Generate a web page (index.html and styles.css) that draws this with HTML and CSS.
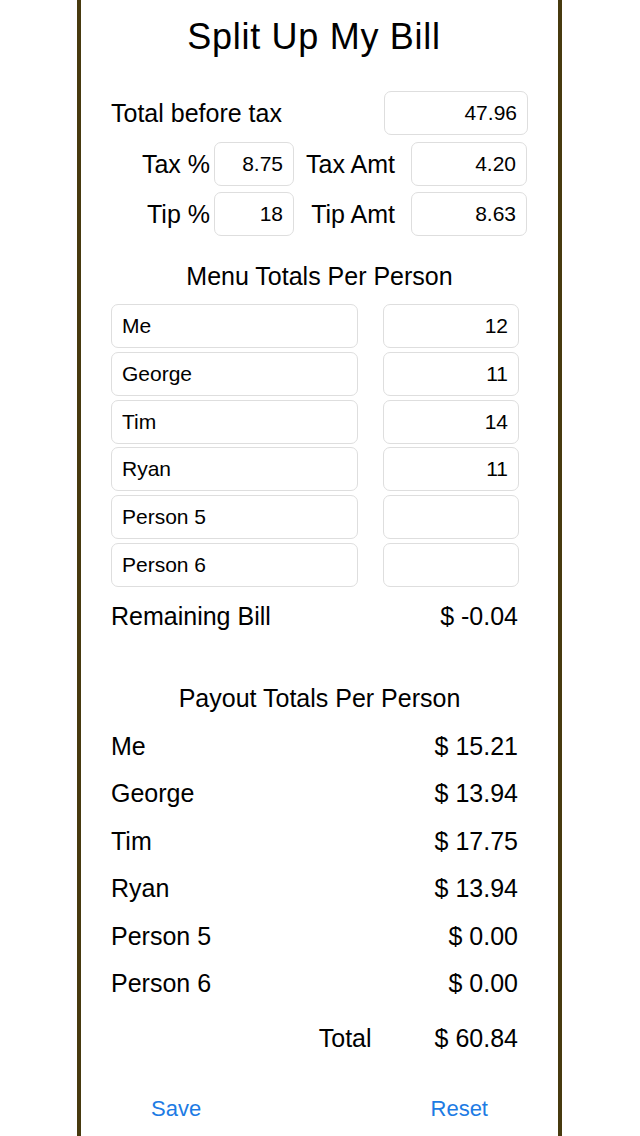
FILE: index.html
```html
<!DOCTYPE html>
<html>
<head>
<meta charset="utf-8">
<link rel="stylesheet" href="styles.css">
</head>
<body>
<div class="page">
  <div class="panel">
    <h1 class="title">Split Up My Bill</h1>

    <div class="bill">
      <div class="row-total">
        <span class="label">Total before tax</span>
        <input class="field num w-total" type="text" value="47.96">
      </div>
      <div class="row-rate">
        <span class="label right">Tax %</span>
        <input class="field num" type="text" value="8.75">
        <span class="label right">Tax Amt</span>
        <input class="field num" type="text" value="4.20">
      </div>
      <div class="row-rate">
        <span class="label right">Tip %</span>
        <input class="field num" type="text" value="18">
        <span class="label right">Tip Amt</span>
        <input class="field num" type="text" value="8.63">
      </div>
    </div>

    <h2 class="heading menu-heading">Menu Totals Per Person</h2>

    <div class="menu">
      <input class="field name" type="text" value="Me"><input class="field num" type="text" value="12">
      <input class="field name" type="text" value="George"><input class="field num" type="text" value="11">
      <input class="field name" type="text" value="Tim"><input class="field num" type="text" value="14">
      <input class="field name" type="text" value="Ryan"><input class="field num" type="text" value="11">
      <input class="field name" type="text" value="Person 5"><input class="field num" type="text" value="">
      <input class="field name" type="text" value="Person 6"><input class="field num" type="text" value="">
    </div>

    <div class="line remaining">
      <span>Remaining Bill</span>
      <span>$ -0.04</span>
    </div>

    <h2 class="heading payout-heading">Payout Totals Per Person</h2>

    <div class="payout">
      <div class="line"><span>Me</span><span>$ 15.21</span></div>
      <div class="line"><span>George</span><span>$ 13.94</span></div>
      <div class="line"><span>Tim</span><span>$ 17.75</span></div>
      <div class="line"><span>Ryan</span><span>$ 13.94</span></div>
      <div class="line"><span>Person 5</span><span>$ 0.00</span></div>
      <div class="line"><span>Person 6</span><span>$ 0.00</span></div>
    </div>

    <div class="line total">
      <span>Total</span>
      <span>$ 60.84</span>
    </div>

    <div class="actions">
      <span class="btn">Save</span>
      <span class="btn">Reset</span>
    </div>
  </div>
</div>
</body>
</html>
```
FILE: styles.css
```css
html, body {
  margin: 0;
  padding: 0;
  background: #ffffff;
}
body {
  font-family: "Liberation Sans", Arial, Helvetica, sans-serif;
  color: #000;
}
.page {
  width: 640px;
  height: 1136px;
  overflow: hidden;
  display: flex;
  justify-content: flex-start;
}
.panel {
  margin-left: 77px;
  width: 477px;
  height: 1136px;
  border-left: 4px solid #473a0f;
  border-right: 4px solid #473a0f;
  box-sizing: content-box;
  display: flex;
  flex-direction: column;
}
.title {
  margin: 15px 0 0 0;
  padding-right: 11px;
  height: 44px;
  line-height: 44px;
  font-size: 36px;
  letter-spacing: 0.7px;
  font-weight: normal;
  text-align: center;
}
.bill {
  margin: 32px 30px 0 30px;
  display: flex;
  flex-direction: column;
  gap: 6.5px;
}
.label {
  font-size: 25px;
  line-height: 44px;
  white-space: nowrap;
}
.right { text-align: right; }
.row-total {
  display: flex;
  justify-content: space-between;
  align-items: center;
  height: 44px;
}
.row-total .label { line-height: 40px; }
.w-total { width: 144px; }
.row-rate {
  display: grid;
  grid-template-columns: 99px 84px 113px 120px;
  height: 44px;
  align-items: center;
}
.row-rate .field:nth-of-type(1) { margin-left: 4px; width: 80px; }
.row-rate .label:nth-of-type(2) { padding-right: 12px; }
.row-rate .field:nth-of-type(2) { width: 116px; justify-self: end; }

.field {
  box-sizing: border-box;
  height: 44px;
  border: 1.5px solid #dedede;
  border-radius: 7px;
  background: #fff;
  font-family: "Liberation Sans", Arial, Helvetica, sans-serif;
  font-size: 21px;
  color: #000;
  padding: 0 10px;
  margin: 0;
  outline: none;
  -webkit-appearance: none;
  appearance: none;
}
.num { text-align: right; }
.name { text-align: left; padding-left: 10px; }

.heading {
  margin: 0;
  height: 30px;
  line-height: 30px;
  font-size: 25px;
  font-weight: normal;
  text-align: center;
}
.menu-heading { margin-top: 25px; }
.menu {
  margin: 13px 39px 0 30px;
  display: grid;
  grid-template-columns: 247px 136px;
  justify-content: space-between;
  row-gap: 3.8px;
}
.menu .field { width: 100%; }

.line {
  display: flex;
  justify-content: space-between;
  align-items: center;
  font-size: 25px;
  height: 47.4px;
  line-height: 47.4px;
  white-space: nowrap;
}
.remaining {
  margin: 14px 40px 0 30px;
  height: 30px;
  line-height: 30px;
}
.payout-heading { margin-top: 52px; }
.payout {
  margin: 10px 40px 0 30px;
}
.total {
  margin: 8px 40px 0 30px;
  justify-content: flex-end;
  gap: 63px;
}
.actions {
  margin-top: 31px;
  padding: 0 70px;
  display: flex;
  justify-content: space-between;
  height: 30px;
  line-height: 30px;
}
.btn {
  font-size: 22px;
  color: #1d7be4;
}
```
